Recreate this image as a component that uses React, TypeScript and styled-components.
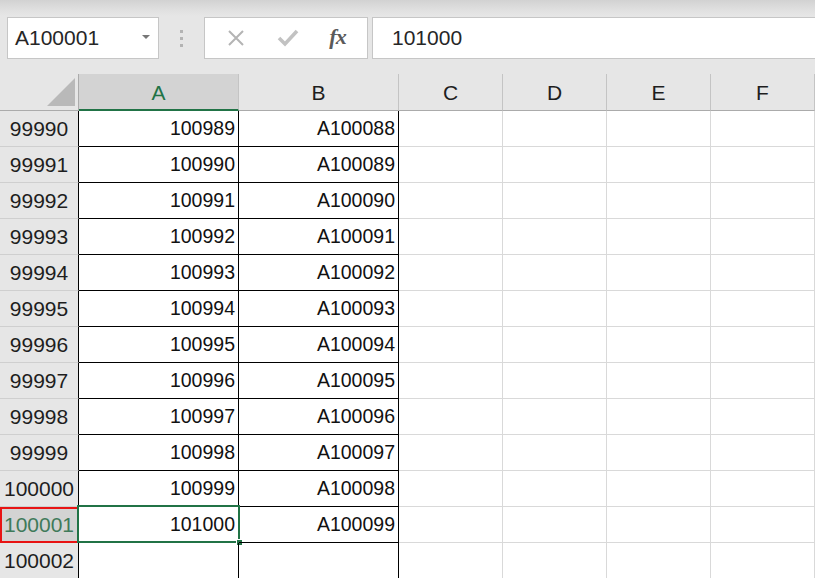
import React from "react";
import styled, { createGlobalStyle, css } from "styled-components";

const GlobalStyle = createGlobalStyle`
  html, body {
    margin: 0;
    padding: 0;
    background: #ffffff;
  }
  body {
    font-family: "Liberation Sans", Arial, sans-serif;
    color: #1e1e1e;
  }
`;

const COLS = ["A", "B", "C", "D", "E", "F"];
const COL_WIDTHS = "79px 160px 160px 104px 104px 104px 104px";

const Shell = styled.div`
  width: 815px;
  height: 578px;
  overflow: hidden;
  background: #e6e6e6;
  display: flex;
  flex-direction: column;
`;

const FormulaBar = styled.div`
  height: 74px;
  box-sizing: border-box;
  padding: 17px 0 15px 7px;
  display: flex;
  align-items: stretch;
  background: linear-gradient(#d2d2d2 0px, #e0e0e0 10px, #e6e6e6 16px);
`;

const Box = styled.div`
  background: #ffffff;
  border: 1px solid #c6c6c6;
  box-sizing: border-box;
  height: 42px;
  display: flex;
  align-items: center;
`;

const NameBox = styled(Box)`
  width: 152px;
  padding: 0 8px 0 7px;
  font-size: 21px;
  color: #262626;
  justify-content: space-between;
`;

const Caret = styled.span`
  width: 0;
  height: 0;
  border-left: 4px solid transparent;
  border-right: 4px solid transparent;
  border-top: 4px solid #777;
  margin-top: -2px;
`;

const Grip = styled.div`
  width: 45px;
  display: flex;
  flex-direction: column;
  align-items: center;
  justify-content: center;
  gap: 4px;
  span {
    width: 3px;
    height: 3px;
    background: #b3b3b3;
  }
`;

const ButtonBox = styled(Box)`
  width: 164px;
  margin-right: 4px;
  justify-content: space-around;
  padding: 0 6px;
`;

const FxLabel = styled.span`
  font-family: "Liberation Serif", "Times New Roman", serif;
  font-style: italic;
  font-weight: bold;
  font-size: 22px;
  color: #5a5a5a;
  letter-spacing: -1px;
  margin-top: -2px;
`;

const FormulaInput = styled(Box)`
  flex: 1;
  border-right: none;
  padding-left: 19px;
  font-size: 21px;
  color: #262626;
`;

const Sheet = styled.div`
  flex: 1;
  display: grid;
  grid-template-columns: ${COL_WIDTHS};
  grid-template-rows: 37px;
  grid-auto-rows: 36px;
  background: #ffffff;
`;

const Corner = styled.div`
  background: #e6e6e6;
  border-right: 1px solid #ababab;
  border-bottom: 1px solid #ababab;
  display: flex;
  align-items: flex-end;
  justify-content: flex-end;
  padding: 0 3px 4px 0;
`;

const ColHeader = styled.div<{ $active?: boolean }>`
  background: ${(p) => (p.$active ? "#d3d3d3" : "#e6e6e6")};
  color: ${(p) => (p.$active ? "#217346" : "#1e1e1e")};
  border-right: 1px solid #c4c4c4;
  border-bottom: ${(p) => (p.$active ? "2px solid #217346" : "1px solid #ababab")};
  display: flex;
  align-items: center;
  justify-content: center;
  font-size: 21px;
  padding-top: 2px;
`;

const RowHeader = styled.div<{ $active?: boolean }>`
  position: relative;
  background: ${(p) => (p.$active ? "#d3d3d3" : "#e6e6e6")};
  color: ${(p) => (p.$active ? "#3f7a5a" : "#1e1e1e")};
  border-right: 1px solid #000;
  border-bottom: 1px solid #cfcfcf;
  display: flex;
  align-items: center;
  justify-content: center;
  font-size: 21px;
  ${(p) =>
    p.$active &&
    css`
      &::after {
        content: "";
        position: absolute;
        inset: 0 -1px -1px 0;
        border: 2px solid #e81414;
      }
    `}
`;

const Cell = styled.div<{ $bordered?: boolean }>`
  position: relative;
  border-right: 1px solid ${(p) => (p.$bordered ? "#000" : "#d9d9d9")};
  border-bottom: 1px solid ${(p) => (p.$bordered ? "#000" : "#d9d9d9")};
  display: flex;
  align-items: center;
  justify-content: flex-end;
  padding-right: 3px;
  font-size: 19.5px;
  color: #111;
`;

const Selection = styled.div`
  position: absolute;
  left: -2px;
  top: -2px;
  right: -2px;
  bottom: -1px;
  border: 2px solid #217346;
  pointer-events: none;
`;

const FillHandle = styled.div`
  position: absolute;
  right: -5px;
  bottom: -5px;
  width: 7px;
  height: 7px;
  background: #217346;
  border: 1px solid #fff;
  box-sizing: border-box;
`;

const CloseIcon = () => (
  <svg width="20" height="20" viewBox="0 0 20 20">
    <path d="M3 3 L17 17 M17 3 L3 17" stroke="#b4b4b4" strokeWidth="2" fill="none" />
  </svg>
);

const CheckIcon = () => (
  <svg width="22" height="20" viewBox="0 0 22 20">
    <path d="M2 10 L8 16 L20 3" stroke="#c2c2c2" strokeWidth="3.6" fill="none" />
  </svg>
);

const CornerMark = () => (
  <svg width="28" height="28" viewBox="0 0 28 28">
    <polygon points="28,0 28,28 0,28" fill="#b9b9b9" />
  </svg>
);

const firstRow = 99990;
const rows = Array.from({ length: 13 }, (_, i) => firstRow + i);
const selectedRow = 100001;

export default function App() {
  return (
    <Shell>
      <GlobalStyle />
      <FormulaBar>
        <NameBox>
          <span>A100001</span>
          <Caret />
        </NameBox>
        <Grip>
          <span />
          <span />
          <span />
        </Grip>
        <ButtonBox>
          <CloseIcon />
          <CheckIcon />
          <FxLabel>fx</FxLabel>
        </ButtonBox>
        <FormulaInput>101000</FormulaInput>
      </FormulaBar>
      <Sheet>
        <Corner>
          <CornerMark />
        </Corner>
        {COLS.map((c) => (
          <ColHeader key={c} $active={c === "A"}>
            {c}
          </ColHeader>
        ))}
        {rows.map((r) => {
          const hasData = r <= selectedRow;
          const active = r === selectedRow;
          return (
            <React.Fragment key={r}>
              <RowHeader $active={active}>{r}</RowHeader>
              <Cell $bordered>
                {hasData ? r + 999 : ""}
                {active && (
                  <Selection>
                    <FillHandle />
                  </Selection>
                )}
              </Cell>
              <Cell $bordered>{hasData ? `A${r + 98}` : ""}</Cell>
              <Cell />
              <Cell />
              <Cell />
              <Cell />
            </React.Fragment>
          );
        })}
      </Sheet>
    </Shell>
  );
}
